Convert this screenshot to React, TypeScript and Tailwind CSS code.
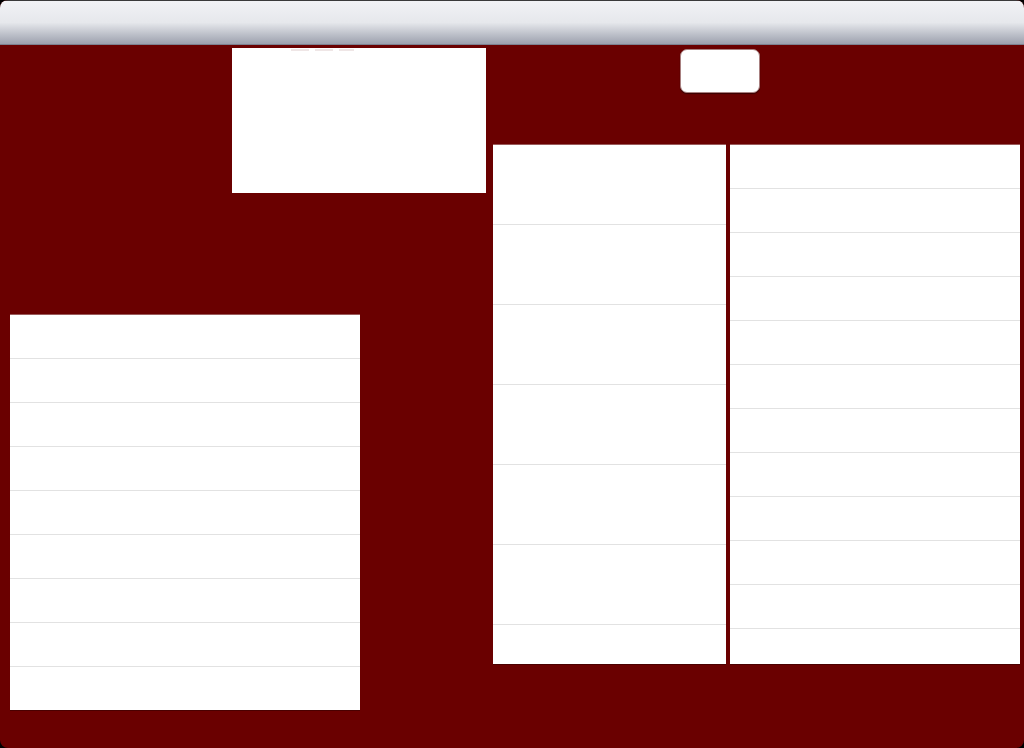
import React from "react";

function List({ rows, rowH, className }: { rows: number; rowH: number; className: string }) {
  return (
    <div className={"bg-white flex flex-col overflow-hidden border-t border-[#9a5a5a] shadow-[0_1px_0_#4a0000] " + className}>
      {Array.from({ length: rows }).map((_, i) => (
        <div
          key={i}
          className="shrink-0 border-b border-[#e2e2e2] bg-white"
          style={{ height: rowH }}
        />
      ))}
    </div>
  );
}

export default function App() {
  return (
    <div className="w-[1024px] h-[748px] bg-black font-['Liberation_Sans',sans-serif]">
      <div className="w-full h-full rounded-[8px] overflow-hidden bg-[#6a0000] flex flex-col">
        <div className="h-[45px] shrink-0 border-t border-[#3a3a3a] border-b border-b-[#7d8190] bg-gradient-to-b from-[#f1f2f5] via-[#e6e8ec] to-[#9da1ae]" />
        <div className="flex flex-1">
          <div className="w-[490px] flex flex-col shrink-0">
            <div className="ml-[232px] mt-[3px] w-[254px] h-[145px] bg-white relative">
              <div className="absolute top-[1px] left-[59px] flex gap-[6px]">
                <div className="w-[18px] h-[2px] bg-[#efe6e6]" />
                <div className="w-[18px] h-[2px] bg-[#efe6e6]" />
                <div className="w-[15px] h-[2px] bg-[#efe6e6]" />
              </div>
            </div>
            <List rows={9} rowH={44} className="ml-[10px] mt-[121px] w-[350px] h-[396px]" />
          </div>
          <div className="flex flex-col flex-1">
            <div className="ml-[190px] mt-[4px] w-[80px] h-[44px] bg-white rounded-[7px] border border-[#a88080] shadow-[0_1px_1px_#3a0000]" />
            <div className="flex gap-[4px] mt-[51px] ml-[3px]">
              <List rows={7} rowH={80} className="w-[233px] h-[520px]" />
              <List rows={12} rowH={44} className="w-[290px] h-[520px]" />
            </div>
          </div>
        </div>
      </div>
    </div>
  );
}
